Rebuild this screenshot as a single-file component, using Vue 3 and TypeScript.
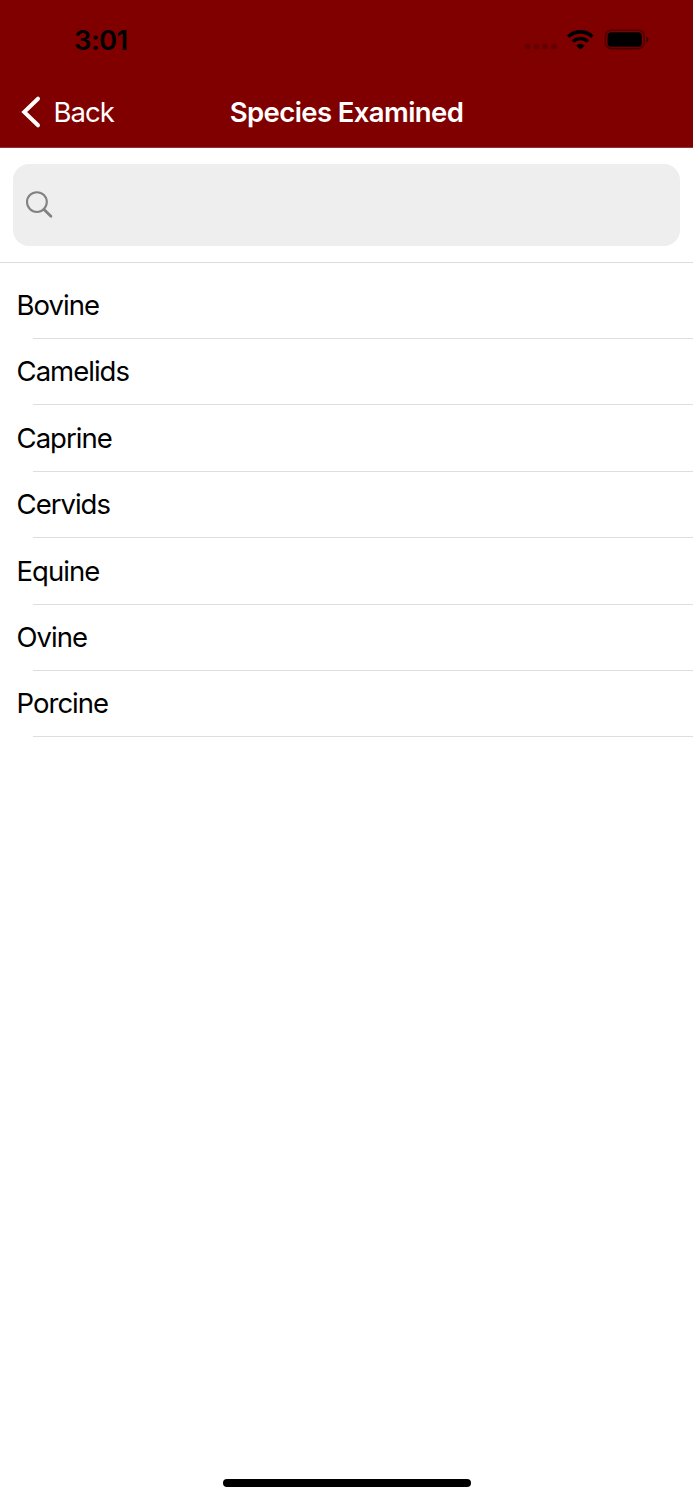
<script setup lang="ts">
const species: string[] = ['Bovine', 'Camelids', 'Caprine', 'Cervids', 'Equine', 'Ovine', 'Porcine']
</script>

<template>
  <main class="screen">
    <header class="top">
      <div class="status">
        <span class="time">3:01</span>
        <svg class="indicators" width="128" height="30" viewBox="0 0 128 30">
          <g fill="#640000">
            <rect x="3" y="18.8" width="5.6" height="5.6" rx="1.8" />
            <rect x="11.8" y="18.8" width="5.6" height="5.6" rx="1.8" />
            <rect x="20.4" y="18.8" width="5.6" height="5.6" rx="1.8" />
            <rect x="29" y="18.8" width="5.6" height="5.6" rx="1.8" />
          </g>
          <g fill="none" stroke="#000" stroke-width="3.6">
            <path d="M46.2 11.8a17.6 17.6 0 0 1 24.4 0" />
            <path d="M50.8 16.5a11 11 0 0 1 15.2 0" />
          </g>
          <path d="M58.4 24.8l-4.3-4.1q4.3-3.8 8.6 0z" />
          <rect x="83.4" y="5.2" width="38.8" height="18.4" rx="5.8" fill="none" stroke="#4c0000" stroke-width="1.6" />
          <rect x="85.6" y="7.2" width="34.2" height="14.6" rx="3.6" />
          <path d="M124.3 11.6q2.2.8 2.2 3t-2.2 3z" fill="#3c0000" />
        </svg>
      </div>
      <nav class="nav">
        <a class="back">
          <svg class="chevron" width="22" height="34" viewBox="0 0 22 34">
            <path d="M18 3.7L4.2 17L18 30.3" fill="none" stroke="#fff" stroke-width="4" stroke-linecap="round" stroke-linejoin="miter" />
          </svg>
          <span class="back-label">Back</span>
        </a>
        <h1 class="title">Species Examined</h1>
      </nav>
    </header>
    <section class="search">
      <div class="field">
        <svg width="30" height="30" viewBox="0 0 30 30" fill="none" stroke="#828285">
          <circle cx="12.9" cy="12.1" r="9.9" stroke-width="2.1" />
          <path d="M20 19.4l6.9 6.8" stroke-width="2.8" stroke-linecap="round" />
        </svg>
      </div>
    </section>
    <ul class="list">
      <li v-for="name in species" :key="name" class="row">
        <span class="name">{{ name }}</span>
      </li>
    </ul>
    <footer class="home"><div class="bar"></div></footer>
  </main>
</template>

<style>
body {
  margin: 0;
  background: #fff;
}
</style>

<style scoped>
.screen {
  width: 693px;
  height: 1500px;
  display: flex;
  flex-direction: column;
  overflow: hidden;
  background: #fff;
  color: #000;
  font-family: Inter, "Liberation Sans", sans-serif;
  font-size: 27.5px;
}
.top {
  height: 148px;
  flex: none;
  box-sizing: border-box;
  background: #800000;
  border-bottom: 1px solid #8d3434;
}
.status {
  height: 77px;
  display: flex;
  justify-content: space-between;
  padding: 0 43px 0 74px;
}
.time {
  margin-top: 24px;
  line-height: 32px;
  font-weight: 600;
  letter-spacing: -0.6px;
}
.indicators {
  margin-top: 25px;
  overflow: visible;
}
.nav {
  height: 69px;
  display: grid;
  grid-template-columns: 1fr auto 1fr;
  align-items: center;
  color: #fff;
}
.back {
  display: flex;
  align-items: center;
  padding-left: 20px;
}
.back-label {
  margin-left: 11.5px;
  line-height: 34px;
  letter-spacing: -1px;
}
.title {
  margin: 0;
  font-size: 27.5px;
  line-height: 34px;
  font-weight: 600;
  letter-spacing: -0.6px;
}
.search {
  height: 115px;
  flex: none;
  box-sizing: border-box;
  padding: 16px 13px;
  border-bottom: 1px solid #dcdcdc;
}
.field {
  height: 82px;
  display: flex;
  align-items: center;
  box-sizing: border-box;
  padding-left: 11px;
  border-radius: 16px;
  background: #eee;
}
.list {
  flex: 1;
  margin: 0;
  padding: 9.6px 0 0;
  list-style: none;
}
.row {
  height: 66.4px;
  display: grid;
  grid-template-rows: 1fr 1px;
  align-items: center;
}
.row::after {
  content: "";
  height: 1px;
  margin-left: 33px;
  background: #dedede;
}
.name {
  padding-left: 16.6px;
  line-height: 34.6px;
  letter-spacing: -1px;
}
.home {
  height: 21.5px;
  flex: none;
  display: flex;
  justify-content: center;
}
.bar {
  width: 248px;
  height: 8.5px;
  border-radius: 5px;
  background: #000;
}
</style>
